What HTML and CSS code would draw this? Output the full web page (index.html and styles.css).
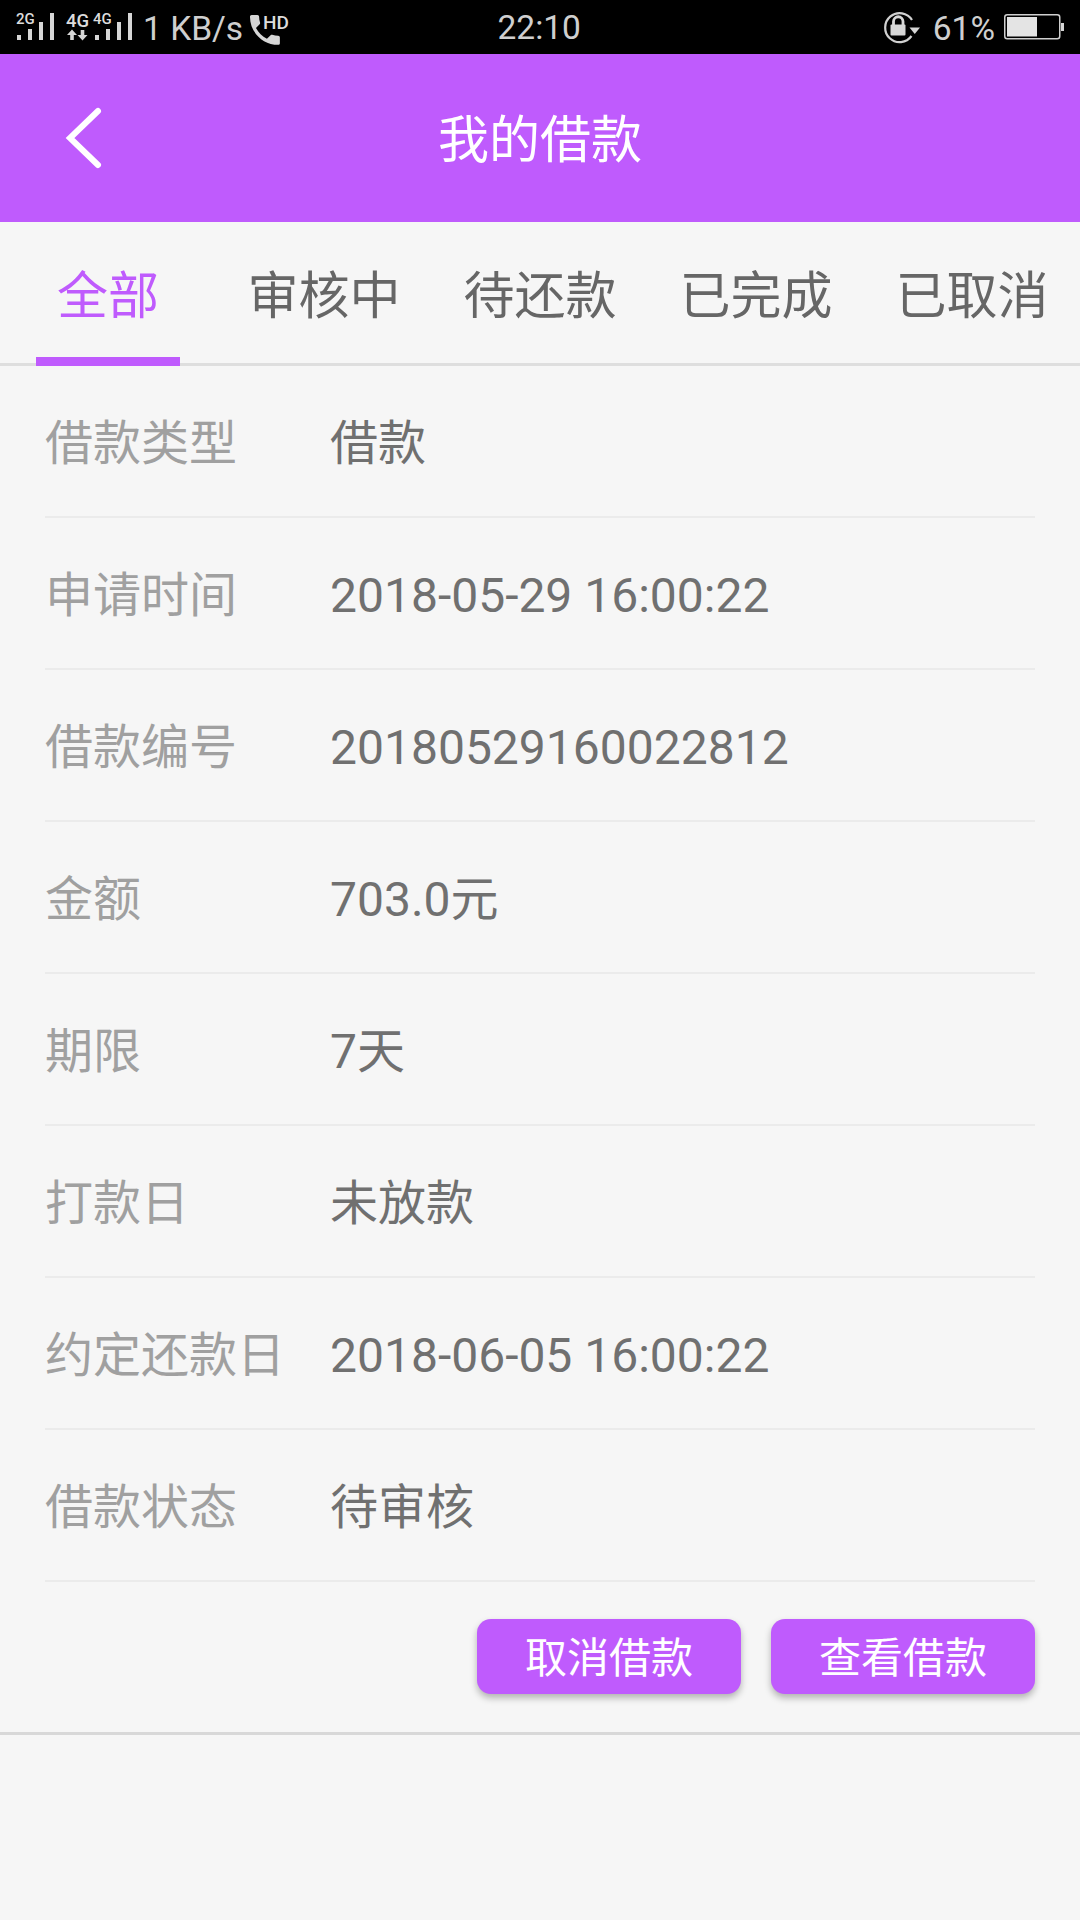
FILE: index.html
```html
<!DOCTYPE html>
<html lang="zh">
<head>
<meta charset="utf-8">
<title>我的借款</title>
<link rel="stylesheet" href="styles.css">
</head>
<body>
<div class="screen">
  <div class="statusbar">
    <div class="status-left">
      <svg class="signals" width="118" height="54" viewBox="16 0 118 54">
        <text class="net-s" x="16" y="24">2G</text>
        <rect x="17" y="35" width="4" height="5"/><rect x="28" y="29" width="4" height="11"/><rect x="39" y="22" width="4" height="18"/><rect x="50" y="13" width="4" height="27"/>
        <text class="net-l" x="66" y="26.500">4G</text>
        <path d="M72 29.500l5 5.500h-3.200v5h-3.600v-5H67zM82.500 40.500L77.500 35h3.200v-5h3.600v5h3.200z"/>
        <text class="net-s" x="93" y="24">4G</text>
        <rect x="95" y="35" width="4" height="5"/><rect x="106" y="29" width="4" height="11"/><rect x="117" y="22" width="4" height="18"/><rect x="128" y="13" width="4" height="27"/>
      </svg>
      <span class="speed">1 KB/s</span>
      <svg class="call" width="44" height="54" viewBox="0 0 44 54">
        <path transform="translate(-3 10) scale(1.66)" d="M6.620 10.790c1.440 2.830 3.760 5.140 6.590 6.590l2.200-2.200c.27-.27.67-.36 1.020-.24 1.120.37 2.330.57 3.570.57.55 0 1 .45 1 1V20c0 .55-.45 1-1 1-9.390 0-17-7.610-17-17 0-.55.45-1 1-1h3.500c.55 0 1 .45 1 1 0 1.250.2 2.450.57 3.570.11.35.03.74-.25 1.020l-2.200 2.200z"/>
        <text class="hd" x="15" y="29">HD</text>
      </svg>
    </div>
    <div class="time">22:10</div>
    <div class="status-right">
      <svg class="lock" width="38" height="54" viewBox="0 0 38 54">
        <path class="ring" d="M28.500 36A14.500 14.500 0 1 1 29 20"/>
        <path d="M26.500 27.500h10.500l-5.250 6.500z"/>
        <path class="shackle" d="M10.500 25v-3.500a4.750 4.750 0 0 1 9.500 0V25"/>
        <rect x="7.500" y="24.500" width="15" height="11" rx="1"/>
      </svg>
      <span class="percent">61%</span>
      <svg class="battery" width="60" height="54" viewBox="0 0 60 54">
        <rect class="batt-shell" x=".75" y="14.750" width="55" height="24" rx="2.500"/>
        <rect class="batt-level" x="3" y="17" width="30" height="19.500"/>
        <rect x="57" y="23" width="3" height="8"/>
      </svg>
    </div>
  </div>

  <header class="appbar">
    <svg class="back" width="120" height="168" viewBox="0 0 120 168">
      <path d="M98 57L70 84l28 27" />
    </svg>
    <h1 class="title">我的借款</h1>
  </header>

  <nav class="tabs">
    <div class="tab active">全部<span class="tab-mark"></span></div>
    <div class="tab">审核中</div>
    <div class="tab">待还款</div>
    <div class="tab">已完成</div>
    <div class="tab">已取消</div>
  </nav>

  <section class="order">
    <div class="row"><div class="label">借款类型</div><div class="value">借款</div></div>
    <div class="row"><div class="label">申请时间</div><div class="value">2018-05-29 16:00:22</div></div>
    <div class="row"><div class="label">借款编号</div><div class="value">20180529160022812</div></div>
    <div class="row"><div class="label">金额</div><div class="value">703.0元</div></div>
    <div class="row"><div class="label">期限</div><div class="value">7天</div></div>
    <div class="row"><div class="label">打款日</div><div class="value">未放款</div></div>
    <div class="row"><div class="label">约定还款日</div><div class="value">2018-06-05 16:00:22</div></div>
    <div class="row"><div class="label">借款状态</div><div class="value">待审核</div></div>
    <div class="actions">
      <button class="btn">取消借款</button>
      <button class="btn">查看借款</button>
    </div>
  </section>
</div>
</body>
</html>
```

FILE: styles.css
```css
* { box-sizing: border-box; }
html, body { margin: 0; padding: 0; }
body {
  width: 1080px;
  height: 1920px;
  overflow: hidden;
  background: #f6f6f6;
  font-family: Roboto, "Noto Sans CJK SC", sans-serif;
}
.screen { width: 1080px; height: 1920px; display: flex; flex-direction: column; }

.statusbar {
  height: 54px;
  background: #000;
  color: #cfcfcf;
  display: grid;
  grid-template-columns: 1fr auto 1fr;
  align-items: center;
  padding: 2px 16px 0;
  font-size: 33.500px;
  line-height: 52px;
}
.status-left, .status-right { display: flex; align-items: center; height: 52px; margin-top: -2px; }
.status-right { justify-content: flex-end; }
.statusbar svg { display: block; fill: #d6d6d6; }
.statusbar text { font-family: Roboto, sans-serif; font-weight: 500; fill: #dcdcdc; }
.net-s { font-size: 15px; }
.net-l { font-size: 18.500px; }
.hd { font-size: 19px; font-weight: 700; }
.speed { margin-left: 9px; font-size: 33.500px; position: relative; top: 2px; }
.call { margin-left: 4.500px; }
.time { width: 82px; text-align: center; margin-left: -3px; white-space: nowrap; }
.ring { fill: none !important; stroke: #d0d0d0; stroke-width: 2.200; }
.shackle { fill: none !important; stroke: #d6d6d6; stroke-width: 2.800; }
.lock { margin-right: 12px; }
.percent { margin-right: 9px; position: relative; top: 2px; }
.batt-shell { fill: none !important; stroke: #cfcfcf; stroke-width: 1.500; }
.batt-level { fill: #e4e4e4 !important; }

.appbar {
  height: 168px;
  background: #bf5bfd;
  display: grid;
  grid-template-columns: 120px 1fr 120px;
  align-items: center;
}
.back { display: block; fill: none; stroke: #fff; stroke-width: 6; stroke-linecap: round; stroke-linejoin: miter; }
.title {
  margin: 0;
  padding-top: 4px;
  color: #fff;
  font-size: 51px;
  font-weight: 400;
  text-align: center;
  line-height: 1;
}

.tabs { display: flex; height: 144px; border-bottom: 3px solid #dedede; }
.tab {
  position: relative;
  flex: 1;
  display: flex;
  align-items: center;
  justify-content: center;
  padding-top: 8px;
  font-size: 51px;
  line-height: 64px;
  color: #666;
}
.tab.active { color: #bf5bfd; }
.tab-mark {
  position: absolute;
  left: 36px;
  right: 36px;
  bottom: -3px;
  height: 9px;
  background: #bf5bfd;
}

.row {
  height: 152px;
  margin: 0 45px;
  padding-top: 5px;
  border-bottom: 2px solid #ebebeb;
  display: flex;
  align-items: center;
  font-size: 48px;
  line-height: 64px;
}
.label { width: 285px; color: #a0a0a0; white-space: nowrap; }
.value { color: #707070; white-space: nowrap; }

.actions {
  display: flex;
  justify-content: flex-end;
  gap: 30px;
  padding: 37px 45px 38px;
  border-bottom: 3px solid #d8d8d8;
}
.btn {
  width: 264px;
  height: 75px;
  padding: 4px 0 0;
  border: 0;
  border-radius: 14px;
  background: #bf5bfd;
  color: #fff;
  font-family: inherit;
  font-size: 42px;
  line-height: 1;
  box-shadow: 0 4px 7px rgba(0, 0, 0, .28);
}
```
